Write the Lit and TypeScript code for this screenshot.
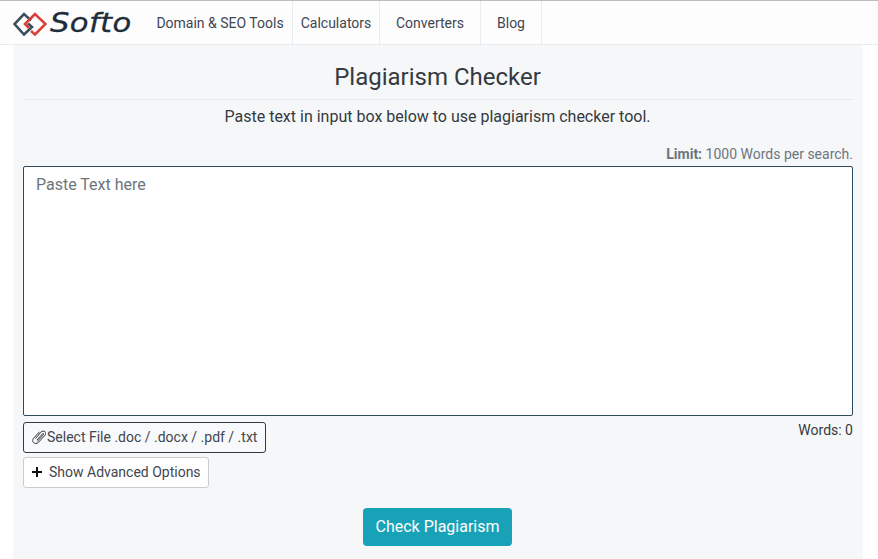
import { LitElement, html, css } from 'lit';
import { customElement } from 'lit/decorators.js';

@customElement('app-root')
export class AppRoot extends LitElement {
  static styles = css`
    :host {
      display: block;
      height: 559px;
      overflow: hidden;
      background: #fff;
      font-family: Roboto, "Liberation Sans", sans-serif;
      color: #343a40;
      font-size: 14px;
    }

    /* top bar */
    .topbar {
      display: flex;
      box-sizing: border-box;
      height: 45px;
      background: #fdfdfe;
      border-top: 1px solid #bdbdbd;
      border-bottom: 1px solid #e9ecef;
    }
    .brand {
      display: flex;
      align-items: center;
      width: 148px;
      padding-left: 13px;
      box-sizing: border-box;
    }
    .brand-name {
      margin-left: 3px;
      font-family: "DejaVu Sans", sans-serif;
      font-style: italic;
      font-size: 26px;
      line-height: 30px;
      letter-spacing: 0.3px;
      color: #1f2d3a;
      -webkit-text-stroke: 0.3px #1f2d3a;
      transform: scaleX(1.18);
      transform-origin: left center;
    }
    .nav {
      display: flex;
    }
    .nav a {
      display: flex;
      align-items: center;
      justify-content: center;
      box-sizing: border-box;
      border-right: 1px solid #e9ecef;
      color: #3f4650;
    }
    .w1 { width: 145px; }
    .w2 { width: 87px; }
    .w3 { width: 101px; }
    .w4 { width: 61px; }

    /* main panel */
    .panel {
      margin: 0 15px 0 13px;
      padding: 0 10px;
      height: 514px;
      background: #f6f7f9;
    }
    h1 {
      margin: 0;
      padding: 16px 1px 0 0;
      height: 38px;
      box-sizing: content-box;
      border-bottom: 1px solid #e9ecef;
      text-align: center;
      font-size: 24px;
      font-weight: 400;
      line-height: 33px;
    }
    .intro {
      margin: 6px 0 0;
      padding-right: 1px;
      text-align: center;
      font-size: 16px;
      line-height: 21px;
    }
    .limit {
      margin-top: 19px;
      text-align: right;
      line-height: 17px;
      color: #6c757d;
    }
    .limit b { font-weight: 700; }
    .input-box {
      display: block;
      box-sizing: border-box;
      width: 100%;
      height: 250px;
      margin-top: 3px;
      padding: 7px 12px;
      border: 1px solid #2f4a5c;
      border-radius: 2px;
      background: #fff;
      font: 400 16px/21px Roboto, sans-serif;
      color: #343a40;
      resize: none;
      outline: none;
    }
    .input-box::placeholder { color: #6c757d; opacity: 1; }

    .file-row {
      display: flex;
      justify-content: space-between;
      margin-top: 6px;
    }
    .words { margin-top: 0; line-height: 17px; }
    .btn {
      display: flex;
      align-items: center;
      box-sizing: border-box;
      font: 400 14px Roboto, sans-serif;
      color: #3f4650;
      background: #fff;
      border-radius: 3px;
      padding: 0 0 1px;
    }
    .file-btn {
      width: 243px;
      height: 31px;
      padding-left: 8px;
      border: 1px solid #343a40;
      background: #f8f9fa;
    }
    .file-btn svg { margin: 0 1px 1px 0; }
    .adv-btn {
      width: 186px;
      height: 31px;
      margin-top: 4px;
      padding-left: 8px;
      border: 1px solid #ccc;
    }
    .adv-btn svg { margin-right: 7px; }
    .submit-row {
      display: flex;
      justify-content: center;
      margin-top: 20px;
      padding-right: 1px;
    }
    .check-btn {
      width: 149px;
      height: 38px;
      border: 0;
      border-radius: 4px;
      background: #17a2b8;
      color: #fff;
      font: 400 16px Roboto, sans-serif;
      padding: 0 0 1px;
    }
  `;

  render() {
    return html`
      <header class="topbar">
        <div class="brand">
          <svg width="34" height="26" viewBox="0 0 34 26" fill="none" stroke-width="2.600">
            <path d="M18 10.500 L11 4 L1.500 14 L11 24.500 L19 17 L15 13.500" stroke="#3d4f5c" />
            <path d="M18 21 L22 24.500 L32.500 14 L22 4 L12 14 L16 18" stroke="#d9403a" />
          </svg>
          <span class="brand-name">Softo</span>
        </div>
        <nav class="nav">
          <a class="w1">Domain &amp; SEO Tools</a>
          <a class="w2">Calculators</a>
          <a class="w3">Converters</a>
          <a class="w4">Blog</a>
        </nav>
      </header>
      <main class="panel">
        <h1>Plagiarism Checker</h1>
        <p class="intro">Paste text in input box below to use plagiarism checker tool.</p>
        <div class="limit"><b>Limit:</b> 1000 Words per search.</div>
        <textarea class="input-box" placeholder="Paste Text here"></textarea>
        <div class="file-row">
          <button class="btn file-btn">
            <svg width="14" height="14" viewBox="0 0 14 14" fill="none" stroke="#343a40" stroke-width="1">
              <path d="M3.500 8.500 L8.800 2.300 C10 .8 12 .8 13 1.800 C14 2.900 13.800 4.400 12.700 5.600 L6.500 12.300 C5 13.800 2.800 13.800 1.500 12.600 C.3 11.400 .4 9.500 1.700 8.100 L7.500 1.800" />
              <path d="M5 10 L10.500 3.800 C11.300 3 12.200 3.800 11.500 4.700 L5.200 11.500" />
            </svg>
            Select File .doc / .docx / .pdf / .txt
          </button>
          <div class="words">Words: 0</div>
        </div>
        <button class="btn adv-btn">
          <svg width="10" height="10" viewBox="0 0 10 10" fill="none" stroke="#111" stroke-width="2">
            <path d="M5 0 V10 M0 5 H10" />
          </svg>
          Show Advanced Options
        </button>
        <div class="submit-row">
          <button class="check-btn">Check Plagiarism</button>
        </div>
      </main>
    `;
  }
}
